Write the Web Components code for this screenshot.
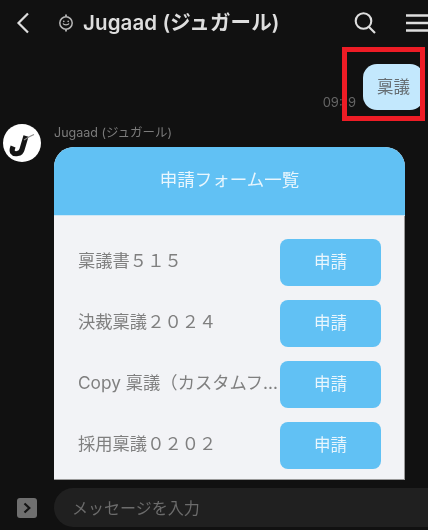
<!DOCTYPE html>
<html lang="ja">
<head>
<meta charset="utf-8">
<title>Jugaad</title>
<style>
  html, body { margin: 0; height: 100%; background: #111; }
  body { font-family: Inter, "Noto Sans CJK JP", sans-serif; overflow: hidden; }
</style>
</head>
<body>
<chat-screen>
  <chat-header slot="header" title="Jugaad (ジュガール)"></chat-header>
  <self-message time="09:19">稟議</self-message>
  <bot-message name="Jugaad (ジュガール)">
    <form-list title="申請フォーム一覧">
      <form-row label="稟議書５１５"></form-row>
      <form-row label="決裁稟議２０２４"></form-row>
      <form-row label="Copy 稟議（カスタムフ…"></form-row>
      <form-row label="採用稟議０２０２"></form-row>
    </form-list>
  </bot-message>
  <chat-composer slot="footer" placeholder="メッセージを入力"></chat-composer>
</chat-screen>

<script>
// small helper: every element gets an open shadow root from a style + markup string
function shadow(el, css, html) {
  if (!el.shadowRoot) el.attachShadow({ mode: "open" });
  el.shadowRoot.innerHTML = `<style>${css}</style>${html}`;
}

class ChatScreen extends HTMLElement {
  connectedCallback() {
    // the source is a soft, upscaled phone capture, hence the slight blur
    shadow(this, `
      :host { display: flex; flex-direction: column; position: relative; width: 428px; height: 530px;
        overflow: hidden; background: #111; filter: blur(.4px); }
      .log { flex: 1; min-height: 0; display: flex; flex-direction: column; }
    `, `<slot name="header"></slot><div class="log"><slot></slot></div><slot name="footer"></slot>`);
  }
}

class ChatHeader extends HTMLElement {
  connectedCallback() {
    shadow(this, `
      :host { display: flex; align-items: center; height: 45px; color: #dedede; flex: none; }
      .back { margin-left: 15px; width: 16px; height: 24px; flex: none; }
      .bot { margin-left: 27px; width: 16px; height: 20px; flex: none; }
      .title { margin-left: 9px; flex: 1; font: 600 20.5px/24px Inter, "Noto Sans CJK JP", sans-serif; white-space: nowrap; letter-spacing: .1px; }
      .search { width: 22px; height: 22px; flex: none; margin-right: 30px; }
      .menu { width: 22px; height: 20px; flex: none; }
      svg { display: block; }
    `, `
      <svg class="back" viewBox="0 0 16 24" fill="none" stroke="#dedede" stroke-width="2.2"><path d="M13 2.5 3.5 12 13 21.5"/></svg>
      <svg class="bot" viewBox="0 0 16 20" fill="none" stroke="#b8b8b8" stroke-width="1.5">
        <circle cx="8" cy="10" r="6.2"/><path d="M8 1.5v2M8 16.5v2" stroke-width="1.8"/>
        <path d="M5 10.5c1 1.8 5 1.8 6 0" stroke-width="1.3"/><circle cx="5.8" cy="8.4" r=".8" fill="#b8b8b8" stroke="none"/><circle cx="10.2" cy="8.4" r=".8" fill="#b8b8b8" stroke="none"/>
      </svg>
      <span class="title">${this.getAttribute("title")}</span>
      <svg class="search" viewBox="0 0 22 22" fill="none" stroke="#dedede" stroke-width="2.1"><circle cx="9.5" cy="9" r="7.8"/><path d="m15 15 6 6"/></svg>
      <svg class="menu" viewBox="0 0 22 20" fill="none" stroke="#dedede" stroke-width="2.4"><path d="M0 2.5h22M0 10h22M0 17.5h22"/></svg>
    `);
    this.removeAttribute("title");
  }
}

class SelfMessage extends HTMLElement {
  connectedCallback() {
    shadow(this, `
      :host { display: flex; justify-content: flex-end; align-items: flex-end; gap: 7px; flex: none;
        margin-top: 19px; padding-right: 4px; }
      .time { font: 13px/14px Inter, sans-serif; color: #666; margin-bottom: 1px; }
      .bubble { width: 61px; height: 46px; box-sizing: border-box; display: flex; align-items: center; justify-content: center;
        border-radius: 14px; background: #c3e8fd; color: #666d72; padding-bottom: 2px;
        font: 400 16.5px/20px "Noto Sans CJK JP", sans-serif; }
      /* the red annotation drawn over the screenshot */
      .mark { position: absolute; left: 342px; top: 47px; width: 83px; height: 74px; box-sizing: border-box;
        border: 5px solid #ee1c25; pointer-events: none; }
    `, `<span class="time">${this.getAttribute("time")}</span><div class="bubble"><slot></slot></div><div class="mark"></div>`);
  }
}

class BotMessage extends HTMLElement {
  connectedCallback() {
    shadow(this, `
      :host { display: grid; grid-template-columns: 38px 1fr; column-gap: 13px; flex: none;
        margin-top: 14px; padding-left: 3px; }
      .avatar { width: 38px; height: 38px; display: block; }
      .name { font: 12.5px/14px Inter, "Noto Sans CJK JP", sans-serif; color: #7c7c7c; height: 23px; padding-top: 2px; box-sizing: border-box; white-space: nowrap; }
      .body { min-width: 0; }
    `, `
      <svg class="avatar" viewBox="0 0 38 38">
        <circle cx="19" cy="19" r="19" fill="#fff"/>
        <path d="M23 12 19 25.500c-1.200 4.500-7.500 5.500-9.500 2.500-.7-1.400-.2-3.500.6-5.500" fill="none" stroke="#151515" stroke-width="5.200"/>
        <path d="M21 16c3-2 6-4 10-5.500" fill="none" stroke="#8a8a8a" stroke-width="1.200"/>
      </svg>
      <div class="body"><div class="name">${this.getAttribute("name")}</div><slot></slot></div>
    `);
  }
}

class FormList extends HTMLElement {
  connectedCallback() {
    shadow(this, `
      :host { display: block; width: 351px; background: #f2f3f6; border-radius: 20px 20px 0 0; overflow: hidden;
        box-shadow: inset -1px -1px 0 #9a9a9a; }
      .head { height: 69px; display: flex; align-items: center; justify-content: center; background: #61c1f4;
        color: #e9f6fd; font: 400 17.5px/20px "Noto Sans CJK JP", sans-serif; border-bottom: 1px solid #cfe8f6;
        box-sizing: border-box; padding-bottom: 4px; }
      .rows { display: flex; flex-direction: column; gap: 14px; padding: 23px 24px 11px; }
    `, `<div class="head">${this.getAttribute("title")}</div><div class="rows"><slot></slot></div>`);
    this.removeAttribute("title");
  }
}

class FormRow extends HTMLElement {
  connectedCallback() {
    shadow(this, `
      :host { display: flex; align-items: center; height: 47px; }
      .label { flex: 1; min-width: 0; white-space: nowrap; padding-bottom: 4px;
        font: 400 17.3px/22px Inter, "Noto Sans CJK JP", sans-serif; color: #7f7f7f; }
      button { flex: none; width: 101px; height: 47px; border: 0; border-radius: 8px; background: #61c1f4;
        color: #e9f6fd; font: 400 16.5px/20px "Noto Sans CJK JP", sans-serif; padding: 0 0 4px; }
    `, `<span class="label">${this.getAttribute("label")}</span><button>申請</button>`);
  }
}

class ChatComposer extends HTMLElement {
  connectedCallback() {
    shadow(this, `
      :host { display: flex; align-items: center; height: 51px; flex: none; box-sizing: border-box; padding: 6px 0 0 17px; }
      .more { width: 20px; height: 20px; flex: none; display: block; }
      .field { margin-left: 17px; margin-right: -30px; flex: 1; height: 39px; border-radius: 20px; background: #202020;
        display: flex; align-items: center; padding-left: 18px; padding-bottom: 2px; box-sizing: border-box;
        font: 400 16px/20px "Noto Sans CJK JP", sans-serif; color: #6c6c6c; }
    `, `
      <svg class="more" viewBox="0 0 20 20"><rect width="20" height="20" rx="3" fill="#6f6f6f"/><path d="m7.500 5.500 4.800 4.500-4.800 4.500" fill="none" stroke="#141414" stroke-width="2.200"/></svg>
      <div class="field">${this.getAttribute("placeholder")}</div>
    `);
  }
}

customElements.define("chat-screen", ChatScreen);
customElements.define("chat-header", ChatHeader);
customElements.define("self-message", SelfMessage);
customElements.define("bot-message", BotMessage);
customElements.define("form-list", FormList);
customElements.define("form-row", FormRow);
customElements.define("chat-composer", ChatComposer);
</script>
</body>
</html>
